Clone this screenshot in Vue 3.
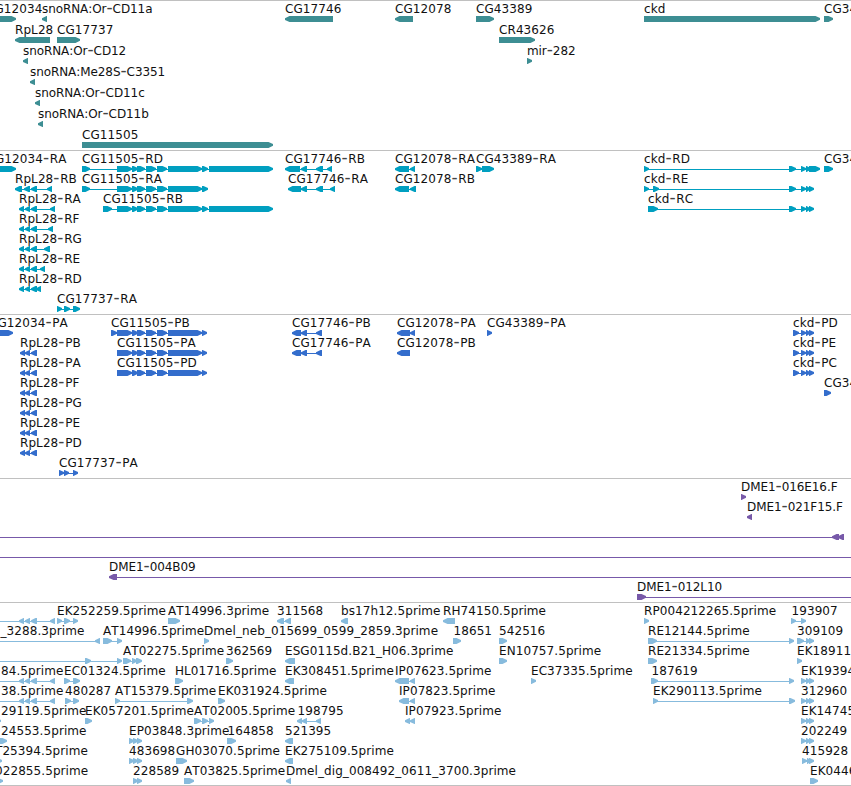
<template>
  <div class="browser">
    <section v-for="track in tracks" :key="track.name" class="track" :class="track.name">
      <svg class="canvas" width="851" :height="track.height - 1">
        <g v-for="(row, i) in track.rows" :key="i" :transform="`translate(0 ${i * track.pitch - 1})`">
          <g v-for="(f, j) in row" :key="j">
            <rect
              v-if="f.to - f.from > 0"
              :x="f.from"
              y="19"
              :width="f.to - f.from"
              height="1"
              class="shape"
            />
            <polygon v-for="(b, k) in f.blocks" :key="k" :points="arrow(b, f.dir)" class="shape" />
            <text
              v-if="f.label"
              :x="f.x"
              y="13"
              class="label"
              :class="{ tight: /^(sno|mir|DME)/.test(f.label) }"
            ><tspan
              v-for="(part, k) in f.label.split(/(-)/)"
              :key="k"
              :class="{ dash: part === '-' }"
            >{{ part }}</tspan></text>
          </g>
        </g>
      </svg>
    </section>
  </div>
</template>

<script setup>
// dir: 'r' forward strand, 'l' reverse strand
const feature = (label, x, dir, blocks, line) => {
  const [from, to] = line || [blocks[0][0], blocks[blocks.length - 1][1] - 3]
  return { label, x, dir, blocks, from: dir === 'l' && !line ? from + 3 : from, to }
}
const r = (label, x, blocks, line) => feature(label, x, 'r', blocks, line)
const l = (label, x, blocks, line) => feature(label, x, 'l', blocks, line)

const arrow = ([a, b], dir) => {
  const head = Math.min(5, b - a)
  if (dir === 'r') {
    return `${a},16 ${b - head + 0.5},16 ${b},18 ${b},19.7 ${b - head + 0.5},22 ${a},22`
  }
  return `${b},16 ${a + head - 0.5},16 ${a},18.2 ${a},19.9 ${a + head - 0.5},22 ${b},22`
}

// shared exon groups
const exons = [[117, 132], [132, 138], [137, 145], [146, 156], [157, 167], [168, 202]]
const rpl = [[19, 24], [25, 30], [31, 37]]
const rplCds = [[20, 25], [25, 30], [31, 37]]
const ckdEnd = [[801, 806], [806, 810], [809, 814]]
const ckdTail = [[789, 796], ...ckdEnd]
const ckdCds = [[793, 799], ...ckdEnd]

const tracks = [
  {
    name: 'genes',
    height: 150,
    pitch: 21,
    rows: [
      [
        r('CG12034', -14, [[-10, 16]]),
        l('snoRNA:Or-CD11a', 42, [[42, 47]]),
        l('CG17746', 285, [[285, 333]]),
        l('CG12078', 395, [[395, 413]]),
        r('CG43389', 476, [[476, 494]]),
        r('ckd', 644, [[644, 820]]),
        r('CG34', 824, [[824, 833]])
      ],
      [
        l('RpL28', 15, [[15, 50]]),
        r('CG17737', 57, [[57, 80]]),
        r('CR43626', 499, [[499, 535]])
      ],
      [l('snoRNA:Or-CD12', 23, [[23, 28]]), r('mir-282', 527, [[527, 532]])],
      [l('snoRNA:Me28S-C3351', 30, [[30, 35]])],
      [l('snoRNA:Or-CD11c', 35, [[35, 40]])],
      [l('snoRNA:Or-CD11b', 38, [[38, 43]])],
      [r('CG11505', 82, [[82, 273]])]
    ]
  },
  {
    name: 'transcripts',
    height: 164,
    pitch: 20,
    rows: [
      [
        r('CG12034-RA', -13.5, [[-10, 16]]),
        r('CG11505-RD', 82, [[82, 90], ...exons, [202, 208], [209, 273]]),
        l('CG17746-RB', 285, [[285, 300], [301, 307], [316, 323], [327, 332]]),
        l('CG12078-RA', 395, [[395, 409], [410, 415]]),
        r('CG43389-RA', 476, [[476, 482], [482, 494]]),
        r('ckd-RD', 644, [[644, 649], [789, 796], [801, 806], [806, 811], [809, 820]]),
        r('CG34', 824, [[824, 833]])
      ],
      [
        l('RpL28-RB', 15, [[15, 22], [24, 30], [31, 37], [47, 52]]),
        r('CG11505-RA', 82, [[82, 90], ...exons, [202, 208]]),
        l('CG17746-RA', 288, [[288, 301], [301, 307], [316, 323], [330, 335]]),
        l('CG12078-RB', 395, [[395, 409], [410, 416]]),
        r('ckd-RE', 644, [[644, 649], [653, 659], ...ckdTail])
      ],
      [
        l('RpL28-RA', 19, [...rpl, [50, 55]]),
        r('CG11505-RB', 103, [[103, 112], ...exons, [202, 208], [209, 273]]),
        r('ckd-RC', 648, [[648, 658], ...ckdTail])
      ],
      [l('RpL28-RF', 19, [...rpl, [48, 53]])],
      [l('RpL28-RG', 19, [...rpl, [44, 50]])],
      [l('RpL28-RE', 19, [...rpl, [40, 45]])],
      [l('RpL28-RD', 19, [...rpl, [36, 41]])],
      [r('CG17737-RA', 57, [[57, 62], [64, 70], [73, 80]])]
    ]
  },
  {
    name: 'proteins',
    height: 164,
    pitch: 20,
    rows: [
      [
        r('CG12034-PA', -11, [[-10, 13]]),
        r('CG11505-PB', 111, [[111, 117], ...exons, [202, 207]]),
        l('CG17746-PB', 292, [[292, 301], [301, 307], [316, 322]]),
        l('CG12078-PA', 397, [[397, 410], [410, 415]]),
        r('CG43389-PA', 487, [[487, 492]]),
        r('ckd-PD', 793, ckdCds)
      ],
      [
        l('RpL28-PB', 20, rplCds),
        r('CG11505-PA', 117, [...exons, [202, 207]]),
        l('CG17746-PA', 292, [[292, 301], [301, 307], [316, 322]]),
        l('CG12078-PB', 397, [[397, 410]]),
        r('ckd-PE', 793, ckdCds)
      ],
      [
        l('RpL28-PA', 20, rplCds),
        r('CG11505-PD', 117, [...exons, [202, 207]]),
        r('ckd-PC', 793, ckdCds)
      ],
      [l('RpL28-PF', 20, rplCds), r('CG34', 824, [[824, 831]])],
      [l('RpL28-PG', 20, rplCds)],
      [l('RpL28-PE', 20, rplCds)],
      [l('RpL28-PD', 20, rplCds)],
      [r('CG17737-PA', 59, [[59, 64], [64, 69], [73, 78]])]
    ]
  },
  {
    name: 'clones',
    height: 124,
    pitch: 20,
    rows: [
      [r('DME1-016E16.F', 741, [[741, 746]])],
      [l('DME1-021F15.F', 747, [[747, 752]])],
      [l('', 0, [[832, 839], [838, 844]], [0, 844])],
      [l('', 0, [], [0, 851])],
      [l('DME1-004B09', 109, [[109, 117]], [112, 851])],
      [r('DME1-012L10', 637, [[637, 646]], [640, 851])]
    ]
  },
  {
    name: 'ests',
    height: 183,
    pitch: 20,
    rows: [
      [
        l('', 0, [...rpl, [50, 55]], [0, 55]),
        r('EK252259.5prime', 57, [[57, 62], [64, 70], [73, 78]]),
        r('AT14996.3prime', 168, [[168, 180]]),
        l('311568', 277, [[277, 284], [285, 291]]),
        l('bs17h12.5prime', 341, [[341, 348]]),
        l('RH74150.5prime', 443, [[443, 455]]),
        r('RP004212265.5prime', 644, [[644, 649]]),
        r('193907', 791.5, [[791, 796], [801, 806]])
      ],
      [
        l('_3288.3prime', 0.5, [[95, 100]], [0, 100]),
        r('AT14996.5prime', 103, [[103, 112], [117, 122]]),
        r('Dmel_neb_015699_0599_2859.3prime', 204, [[204, 209]]),
        r('18651', 453.5, [[453, 461]]),
        r('542516', 499, [[499, 507]]),
        r('RE12144.5prime', 648, [[648, 657], [789, 794]]),
        r('309109', 797, [[797, 804], [806, 810], [809, 814]])
      ],
      [
        r('', 0, [[85, 91], [117, 122]], [0, 120]),
        r('AT02275.5prime', 123, [[123, 131], [132, 137], [136, 142]]),
        r('362569', 226, [[226, 233]]),
        l('ESG0115d.B21_H06.3prime', 285, [[285, 295]]),
        r('EN10757.5prime', 499, [[499, 507]]),
        r('RE21334.5prime', 648, [[648, 657]]),
        r('EK18911', 797, [[797, 802]])
      ],
      [
        l('84.5prime', 1, [...rpl, [50, 55]], [0, 55]),
        r('EC01324.5prime', 64, [[64, 70], [73, 80]]),
        r('HL01716.5prime', 175, [[175, 183]]),
        l('EK308451.5prime', 285, [[285, 294]]),
        l('IP07623.5prime', 395, [[395, 409], [410, 415]]),
        r('EC37335.5prime', 531, [[531, 536]]),
        r('187619', 651.5, [[651, 658], [789, 794]]),
        r('EK19394', 801, ckdEnd)
      ],
      [
        l('38.5prime', 1, [...rpl, [50, 55]], [0, 55]),
        r('480287', 65, [[65, 71], [73, 79]]),
        r('AT15379.5prime', 115, [[115, 120], [187, 193]]),
        r('EK031924.5prime', 218, [[218, 225]]),
        l('IP07823.5prime', 399, [[399, 409], [410, 415]]),
        r('EK290113.5prime', 653, [[653, 658], [789, 795]]),
        r('312960', 801, ckdEnd)
      ],
      [
        r('29119.5prime', 1, [[-8, 1]]),
        r('EK057201.5prime', 85, [[85, 92]]),
        r('AT02005.5prime', 194, [[194, 201], [202, 208], [209, 214]]),
        l('198795', 297.5, [[297, 302], [302, 307], [316, 321]]),
        l('IP07923.5prime', 405, [[405, 410], [410, 415]]),
        r('EK14745', 801, ckdEnd)
      ],
      [
        r('24553.5prime', 1, [[-8, 7]]),
        r('EP03848.3prime', 129, [[129, 134], [133, 138], [137, 142]]),
        r('164858', 227.5, [[227, 236]]),
        l('521395', 285, [[285, 293]]),
        r('202249', 801, ckdEnd)
      ],
      [
        r('T25394.5prime', -5, [[-8, 2]]),
        r('483698', 129, [[129, 134], [133, 138], [137, 142]]),
        r('GH03070.5prime', 176, [[176, 187]]),
        l('EK275109.5prime', 285, [[285, 293]]),
        r('415928', 802, [[802, 807], [807, 811], [809, 814]])
      ],
      [
        r('022855.5prime', -5, [[-8, 3]]),
        r('228589', 133, [[133, 138], [137, 142]]),
        r('AT03825.5prime', 184, [[184, 194]]),
        l('Dmel_dig_008492_0611_3700.3prime', 286, [[286, 291]]),
        r('EK0446', 810, [[810, 818]])
      ]
    ]
  }
]
</script>

<style>
body {
  background: #fff;
}
</style>

<style scoped>
.browser {
  display: flex;
  flex-direction: column;
  width: 851px;
  height: 786px;
  overflow: hidden;
  background: #fff;
}

.track {
  border-top: 1px solid #c0c0c0;
}

.track:last-child {
  border-bottom: 1px solid #c0c0c0;
}

.canvas {
  display: block;
}

.label {
  font-family: "DejaVu Sans", sans-serif;
  font-size: 12px;
  font-kerning: none;
  letter-spacing: 0.08px;
  fill: #111;
}

.label.tight {
  letter-spacing: -0.08px;
}

/* wide hyphen between the gene name and its suffix */
.dash {
  font-size: 17px;
  letter-spacing: 0.7px;
  fill: #444;
}

.tight .dash {
  letter-spacing: 0;
}

.shape {
  fill: currentColor;
}

.genes {
  color: #3d8e93;
}

.transcripts {
  color: #009fc0;
}

.proteins {
  color: #336dcc;
}

.clones {
  color: #7759a9;
}

.ests {
  color: #87bbdd;
}
</style>
